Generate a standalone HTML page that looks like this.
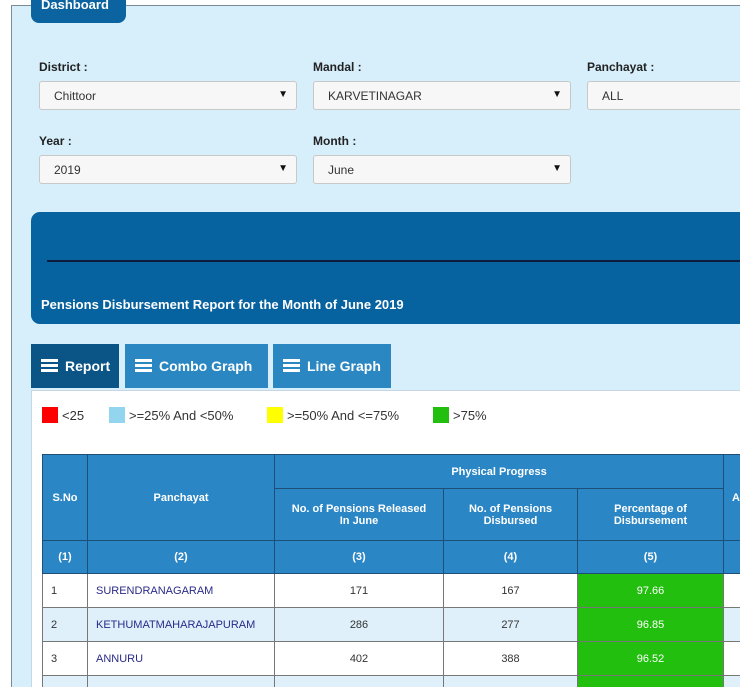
<!DOCTYPE html>
<html style="overflow:hidden;width:740px;height:687px"><head><style>
*{box-sizing:border-box;margin:0;padding:0}
body{width:740px;height:687px;overflow:hidden;background:#fff;font-family:"Liberation Sans",sans-serif;position:relative}
.fs{position:absolute;left:11px;top:5px;width:760px;height:700px;background:#d7effb;border:1px solid #7a8a96}
.tab0{position:absolute;left:31px;top:-2px;width:95px;height:25px;background:#0b63a0;border-radius:0 0 8px 8px;color:#fff;font-weight:bold;font-size:13px;padding:0 0 0 10px;line-height:14px}
.lbl{position:absolute;font-size:12px;font-weight:bold;color:#222}
.sel{position:absolute;height:29px;background:#f7f7f7;border:1px solid #c8c8c8;border-radius:3px;font-size:12px;color:#333;padding:7px 0 0 14px}
.sel .a{position:absolute;right:8px;top:7px;font-size:10px;color:#111}
.ban{position:absolute;left:31px;top:212px;width:720px;height:112px;background:#0762a0;border-radius:9px}
.ban .ln{position:absolute;left:16px;top:48px;right:0;height:2px;background:#0c1c3a}
.ban .t{position:absolute;left:10px;top:85px;color:#fff;font-weight:bold;font-size:13px}
.tb{position:absolute;top:344px;height:44px;color:#fff;font-weight:bold;font-size:14px;line-height:44px;padding-left:10px}
.ic{display:inline-block;width:17px;height:13px;vertical-align:-1px;margin-right:7px;background:repeating-linear-gradient(#fff 0 3px,transparent 3px 5px)}
.pan{position:absolute;left:31px;top:390px;width:720px;height:300px;background:#fff;border:1px solid #c6d6e2}
.lg{position:absolute;top:407px;font-size:13px;color:#333}
.lg i{display:inline-block;width:16px;height:16px;vertical-align:-3px;margin-right:4px}
table{position:absolute;left:42px;top:454px;border-collapse:collapse;font-size:11px;table-layout:fixed;width:721px}
td,th{border:1px solid #1f4f76;text-align:center}
th{background:#2a86c4;color:#fff;font-weight:bold;font-size:11px}
td{color:#333;height:34px;border-color:#777}
td.l{text-align:left;padding-left:8px}
td.n{color:#2a2a8a}
td.g{background:#22bf0e;color:#fff}
tr.b td{background:#dff0fb}
tr.b td.g{background:#22bf0e}
</style></head><body>
<div class="fs"></div>
<div class="tab0">Dashboard</div>
<div class="lbl" style="left:39px;top:60px">District :</div>
<div class="lbl" style="left:313px;top:60px">Mandal :</div>
<div class="lbl" style="left:587px;top:60px">Panchayat :</div>
<div class="sel" style="left:39px;top:81px;width:258px">Chittoor<span class="a">▼</span></div>
<div class="sel" style="left:313px;top:81px;width:258px">KARVETINAGAR<span class="a">▼</span></div>
<div class="sel" style="left:587px;top:81px;width:170px">ALL</div>
<div class="lbl" style="left:39px;top:134px">Year :</div>
<div class="lbl" style="left:313px;top:134px">Month :</div>
<div class="sel" style="left:39px;top:155px;width:258px">2019<span class="a">▼</span></div>
<div class="sel" style="left:313px;top:155px;width:258px">June<span class="a">▼</span></div>
<div class="ban"><div class="ln"></div><div class="t">Pensions Disbursement Report for the Month of June 2019</div></div>
<div class="tb" style="left:31px;width:88px;background:#0b5586"><span class="ic"></span>Report</div>
<div class="tb" style="left:125px;width:143px;background:#2a87c1"><span class="ic"></span>Combo Graph</div>
<div class="tb" style="left:273px;width:118px;background:#2a87c1"><span class="ic"></span>Line Graph</div>
<div class="pan"></div>
<div class="lg" style="left:42px"><i style="background:#f00"></i>&lt;25</div>
<div class="lg" style="left:109px"><i style="background:#93d4ee"></i>&gt;=25% And &lt;50%</div>
<div class="lg" style="left:267px"><i style="background:#ff0"></i>&gt;=50% And &lt;=75%</div>
<div class="lg" style="left:433px"><i style="background:#22bf0e"></i>&gt;75%</div>
<table>
<colgroup><col style="width:45px"><col style="width:187px"><col style="width:169px"><col style="width:134px"><col style="width:146px"><col style="width:40px"></colgroup>
<tr style="height:34px"><th rowspan="2">S.No</th><th rowspan="2">Panchayat</th><th colspan="3">Physical Progress</th><th rowspan="2" style="text-align:left;padding-left:8px">A</th></tr>
<tr style="height:52px"><th>No. of Pensions Released<br>In June</th><th>No. of Pensions<br>Disbursed</th><th>Percentage of<br>Disbursement</th></tr>
<tr style="height:33px"><th>(1)</th><th>(2)</th><th>(3)</th><th>(4)</th><th>(5)</th><th></th></tr>
<tr><td class="l">1</td><td class="l n">SURENDRANAGARAM</td><td>171</td><td>167</td><td class="g">97.66</td><td></td></tr>
<tr class="b"><td class="l">2</td><td class="l n">KETHUMATMAHARAJAPURAM</td><td>286</td><td>277</td><td class="g">96.85</td><td></td></tr>
<tr><td class="l">3</td><td class="l n">ANNURU</td><td>402</td><td>388</td><td class="g">96.52</td><td></td></tr>
<tr class="b"><td class="l"></td><td></td><td></td><td></td><td class="g"></td><td></td></tr>
</table>
</body></html>
